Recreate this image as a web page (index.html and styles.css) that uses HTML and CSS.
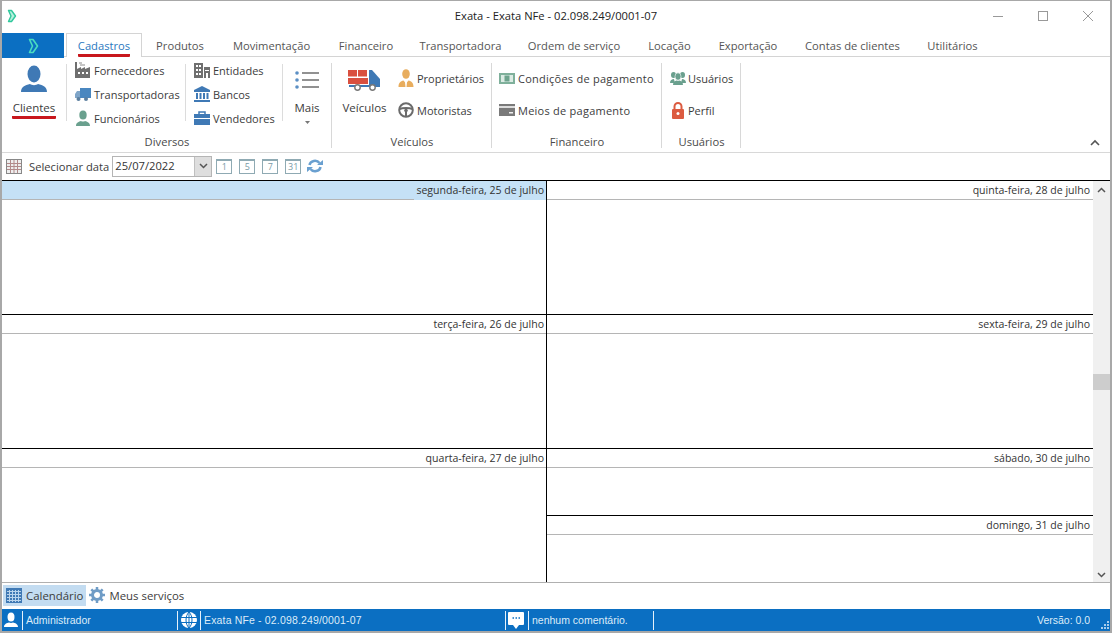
FILE: index.html
```html
<!DOCTYPE html>
<html lang="pt">
<head>
<meta charset="utf-8">
<title>Exata</title>
<link rel="stylesheet" href="styles.css">
</head>
<body>
<div class="window">
  <header class="titlebar">
    <svg class="app-icon" width="10" height="14" viewBox="0 0 10 14"><path d="M1.500 1.500H4.500L8.500 7L4.500 12.500H1.500L4 7Z" fill="#b6f0dc" stroke="#2fc79c" stroke-width="1.400" stroke-linejoin="round"/></svg>
    <div class="title">Exata - Exata NFe - 02.098.249/0001-07</div>
    <div class="winbtns">
      <svg width="12" height="12" viewBox="0 0 12 12"><path d="M1 6.500H11" stroke="#999"/></svg>
      <svg width="12" height="12" viewBox="0 0 12 12"><rect x="1.500" y="1.500" width="9" height="9" fill="none" stroke="#999"/></svg>
      <svg width="12" height="12" viewBox="0 0 12 12"><path d="M1 1L11 11M11 1L1 11" stroke="#999"/></svg>
    </div>
  </header>

  <nav class="tabs">
    <div class="filetab"><svg width="11" height="16" viewBox="0 0 11 16"><path d="M1.500 1.500H5L9.500 8L5 14.500H1.500L4.500 8Z" fill="#0b6fc2" stroke="#49dcc0" stroke-width="1.600" stroke-linejoin="round"/></svg></div>
    <div class="tab active"><span class="underlined">Cadastros</span></div>
    <div class="tab">Produtos</div>
    <div class="tab">Movimentação</div>
    <div class="tab">Financeiro</div>
    <div class="tab">Transportadora</div>
    <div class="tab">Ordem de serviço</div>
    <div class="tab">Locação</div>
    <div class="tab">Exportação</div>
    <div class="tab">Contas de clientes</div>
    <div class="tab">Utilitários</div>
  </nav>

  <section class="ribbon">
    <div class="group g-diversos">
      <div class="group-body">
        <div class="big clientes">
          <svg width="28" height="28" viewBox="0 0 28 28"><ellipse cx="14" cy="9" rx="6.500" ry="8.500" fill="#3f79b5"/><path d="M1 27c0-5 4-7 9-8 2 1.500 6 1.500 8 0 5 1 9 3 9 8z" fill="#3f79b5"/></svg>
          <span class="biglabel underlined2">Clientes</span>
        </div>
        <div class="sep"></div>
        <div class="col c1">
          <div class="item"><svg width="16" height="16" viewBox="0 0 16 16"><path d="M0 16V0h2v7l4-2v2l4-2v2l5-2v11z" fill="#6f6f6f"/><path d="M4 1h3M5 3h5" stroke="#8c8c8c"/><path d="M3 11h2M7 11h2M11 11h2" stroke="#fff" stroke-width="2"/></svg><span>Fornecedores</span></div>
          <div class="item"><svg width="16" height="16" viewBox="0 0 16 16"><rect x="5" y="2" width="11" height="10" fill="#4a87c0"/><path d="M0 12V8l2-3h3v7z" fill="#7fa5c8"/><circle cx="3.500" cy="13" r="2" fill="#5c7f9f"/><circle cx="11" cy="13" r="2" fill="#5c7f9f"/></svg><span>Transportadoras</span></div>
          <div class="item"><svg width="16" height="16" viewBox="0 0 16 16"><ellipse cx="8" cy="5" rx="3.700" ry="4.500" fill="#6aa08e"/><path d="M1 16c0-3.500 3-4.500 5-5 1 .8 3 .8 4 0 2 .5 5 1.500 5 5z" fill="#6aa08e"/></svg><span>Funcionários</span></div>
        </div>
        <div class="sep"></div>
        <div class="col c2">
          <div class="item"><svg width="16" height="16" viewBox="0 0 16 16"><path d="M0 1h9v15H0z" fill="#6f6f6f"/><path d="M10 5h6v11h-6z" fill="#6f6f6f"/><path d="M2 3h2v2H2zM5 3h2v2H5zM2 7h2v2H2zM5 7h2v2H5zM2 11h2v2H2zM5 11h2v2H5z" fill="#fff"/><path d="M11 8h4v1h-4zM12 11h2v5h-2z" fill="#fff"/></svg><span>Entidades</span></div>
          <div class="item"><svg width="16" height="16" viewBox="0 0 16 16"><path d="M8 0L0 4v2h16V4z" fill="#3f79b5"/><path d="M2 7h2v6H2zM5.500 7h2v6h-2zM9 7h2v6H9zM12.500 7h2v6h-2zM0 14h16v2H0z" fill="#3f79b5"/></svg><span>Bancos</span></div>
          <div class="item"><svg width="16" height="14" viewBox="0 0 16 14"><path d="M5 3V1h6v2" fill="none" stroke="#3f79b5" stroke-width="1.500"/><path d="M0 3h16v4H0zM0 8h16v6H0z" fill="#3f79b5"/></svg><span>Vendedores</span></div>
        </div>
        <div class="sep"></div>
        <div class="big mais">
          <svg width="24" height="18" viewBox="0 0 24 18"><g fill="#5b8fc4"><circle cx="2" cy="2" r="1.800"/><circle cx="2" cy="9" r="1.800"/><circle cx="2" cy="16" r="1.800"/></g><path d="M7 2H24M7 9H24M7 16H24" stroke="#6e6e6e" stroke-width="1.600"/></svg>
          <span class="biglabel">Mais</span>
          <svg class="caret" width="5" height="3" viewBox="0 0 5 3"><path d="M0 0H5L2.500 3z" fill="#777"/></svg>
        </div>
      </div>
      <div class="group-label">Diversos</div>
    </div>

    <div class="group g-veiculos">
      <div class="group-body">
        <div class="big veiculos">
          <svg width="33" height="21" viewBox="0 0 33 21"><path d="M0 0h9v6.500H0zM10 0h9v6.500h-9zM0 8h20v6H0z" fill="#d9503f"/><path d="M21 0h3l8 9v7H21z" fill="#3f79b5"/><path d="M1 15h31v2H1z" fill="#3f79b5"/><circle cx="9.500" cy="17.500" r="2.700" fill="#fff" stroke="#777" stroke-width="1.400"/><circle cx="24.500" cy="17.500" r="2.700" fill="#fff" stroke="#777" stroke-width="1.400"/></svg>
          <span class="biglabel">Veículos</span>
        </div>
        <div class="col c3">
          <div class="item"><svg width="15" height="18" viewBox="0 0 15 18"><ellipse cx="7.500" cy="5" rx="3.800" ry="4.800" fill="#e8ad5e"/><path d="M0 18c0-4 2-6 5-6.500l2.500 3 2.500-3c3 .5 5 2.500 5 6.500z" fill="#e8ad5e"/><path d="M6.500 13h2l-.5 5h-1z" fill="#fff"/></svg><span>Proprietários</span></div>
          <div class="item"><svg width="16" height="16" viewBox="0 0 16 16"><circle cx="8" cy="8" r="6.800" fill="none" stroke="#6b6b6b" stroke-width="2"/><path d="M1.500 7c3-1.500 10-1.500 13 0M8 9v6" stroke="#6b6b6b" stroke-width="2"/><circle cx="8" cy="8.500" r="1.800" fill="#6b6b6b"/></svg><span>Motoristas</span></div>
        </div>
      </div>
      <div class="group-label">Veículos</div>
    </div>

    <div class="group g-fin">
      <div class="group-body">
        <div class="col c4">
          <div class="item"><svg width="16" height="11" viewBox="0 0 16 11"><rect width="16" height="11" fill="#7fb09b"/><rect x="2" y="2" width="12" height="7" fill="#dcebe4"/><rect x="5.500" y="2.500" width="5" height="6" fill="#6ea38d"/></svg><span>Condições de pagamento</span></div>
          <div class="item"><svg width="16" height="12" viewBox="0 0 16 12"><rect width="16" height="12" fill="#7a7a7a"/><rect y="2" width="16" height="2" fill="#ddd"/><rect x="10" y="8" width="4" height="1.500" fill="#eee"/></svg><span>Meios de pagamento</span></div>
        </div>
      </div>
      <div class="group-label">Financeiro</div>
    </div>

    <div class="group g-usr">
      <div class="group-body">
        <div class="col c5">
          <div class="item"><svg width="16" height="14" viewBox="0 0 16 14"><g fill="#6aa08e"><ellipse cx="3.500" cy="4" rx="2.500" ry="3"/><ellipse cx="12.500" cy="4" rx="2.500" ry="3"/><path d="M0 12c0-3 2-4 4-4l1 4zM16 12c0-3-2-4-4-4l-1 4z"/><ellipse cx="8" cy="5.500" rx="3" ry="3.700" stroke="#fff" stroke-width=".6"/><path d="M3 14c0-3 2-4 3.500-4.500 1 .5 2 .5 3 0C11 10 13 11 13 14z"/></g></svg><span>Usuários</span></div>
          <div class="item"><svg width="14" height="17" viewBox="0 0 14 17"><path d="M3.500 7V4.500a3.500 3.500 0 0 1 7 0V7" fill="none" stroke="#dc5b40" stroke-width="2"/><rect x="1" y="7" width="12" height="10" rx="1" fill="#dc5b40"/><circle cx="7" cy="11.500" r="1.500" fill="#fff"/></svg><span>Perfil</span></div>
        </div>
      </div>
      <div class="group-label">Usuários</div>
    </div>

    <svg class="collapse" width="10" height="7" viewBox="0 0 10 7"><path d="M1 6L5 2L9 6" fill="none" stroke="#555" stroke-width="1.600"/></svg>
  </section>

  <section class="datebar">
    <svg width="16" height="15" viewBox="0 0 16 15"><rect x=".5" y=".5" width="15" height="14" fill="#eee" stroke="#888"/><path d="M1 4.500H15M1 7.500H15M1 10.500H15M4.500 1V14M8 1V14M11.500 1V14" stroke="#b28a8a"/></svg>
    <span class="datelabel">Selecionar data</span>
    <div class="datefield"><span class="dateval">25/07/2022</span><span class="datebtn"><svg width="9" height="6" viewBox="0 0 9 6"><path d="M1 1L4.500 4.500L8 1" fill="none" stroke="#555" stroke-width="1.500"/></svg></span></div>
    <div class="days">
      <span class="day">1</span><span class="day">5</span><span class="day">7</span><span class="day">31</span>
    </div>
    <svg class="refresh" width="16" height="14" viewBox="0 0 16 14"><path d="M2.500 6a5.500 5 0 0 1 10-2" fill="none" stroke="#6aa0d0" stroke-width="2.500"/><path d="M13.500 8a5.500 5 0 0 1-10 2" fill="none" stroke="#6aa0d0" stroke-width="2.500"/><path d="M10 6h6V1zM6 8H0v5z" fill="#6aa0d0"/></svg>
  </section>

  <main class="calendar">
    <div class="cal-col left">
      <div class="cell"><div class="cell-head selected"><span class="sel-label">segunda-feira, 25 de julho</span></div></div>
      <div class="cell"><div class="cell-head">terça-feira, 26 de julho</div></div>
      <div class="cell last"><div class="cell-head">quarta-feira, 27 de julho</div></div>
    </div>
    <div class="cal-col right">
      <div class="cell"><div class="cell-head">quinta-feira, 28 de julho</div></div>
      <div class="cell"><div class="cell-head">sexta-feira, 29 de julho</div></div>
      <div class="cell half"><div class="cell-head">sábado, 30 de julho</div></div>
      <div class="cell last"><div class="cell-head">domingo, 31 de julho</div></div>
    </div>
    <div class="scrollbar">
      <svg width="9" height="6" viewBox="0 0 9 6"><path d="M1 5L4.500 1.500L8 5" fill="none" stroke="#555" stroke-width="1.500"/></svg>
      <div class="track"><div class="thumb"></div></div>
      <svg width="9" height="6" viewBox="0 0 9 6"><path d="M1 1L4.500 4.500L8 1" fill="none" stroke="#555" stroke-width="1.500"/></svg>
    </div>
  </main>

  <section class="viewtabs">
    <div class="viewtab on"><svg width="16" height="15" viewBox="0 0 16 15"><rect width="16" height="15" fill="#3f79b5"/><path d="M1 3.500H15M1 6.500H15M1 9.500H15M1 12.500H15M3.500 2V14M6.500 2V14M9.500 2V14M12.500 2V14" stroke="#b9d4ec"/></svg><span>Calendário</span></div>
    <div class="viewtab"><svg width="16" height="16" viewBox="0 0 16 16"><circle cx="8" cy="8" r="4.500" fill="none" stroke="#6f9cc6" stroke-width="3"/><path d="M8 0v3M8 13v3M0 8h3M13 8h3M2.300 2.300l2.200 2.200M11.500 11.500l2.200 2.200M13.700 2.300l-2.200 2.200M4.500 11.500l-2.200 2.200" stroke="#6f9cc6" stroke-width="2.500"/></svg><span>Meus serviços</span></div>
  </section>

  <footer class="status">
    <svg class="st-user" width="14" height="16" viewBox="0 0 14 16"><ellipse cx="7" cy="5" rx="3.500" ry="4.500" fill="#fff"/><path d="M0 15c0-3 3-4 5-4.500 1 .6 3 .6 4 0 2 .5 5 1.500 5 4.500z" fill="#fff"/></svg>
    <span class="st-div"></span>
    <span class="st-text st-admin">Administrador</span>
    <span class="st-div"></span>
    <svg class="st-globe" width="18" height="18" viewBox="0 0 18 18"><circle cx="9" cy="9" r="8" fill="#fff"/><path d="M1 6.500H17M1 11.500H17M9 1V17M9 1C5 5 5 13 9 17M9 1C13 5 13 13 9 17" fill="none" stroke="#0b6fc2"/></svg>
    <span class="st-div"></span>
    <span class="st-text st-nfe">Exata NFe - 02.098.249/0001-07</span>
    <span class="st-div"></span>
    <svg class="st-chat" width="16" height="17" viewBox="0 0 16 17"><path d="M1 0h14a1 1 0 0 1 1 1v11a1 1 0 0 1-1 1h-4l-3 4-3-4H1a1 1 0 0 1-1-1V1a1 1 0 0 1 1-1z" fill="#fff"/><path d="M4.500 6h1.500M7.500 6h1.500M10.500 6h1.500" stroke="#0b6fc2" stroke-width="1.500"/></svg>
    <span class="st-div"></span>
    <span class="st-text st-com">nenhum comentário.</span>
    <span class="st-div"></span>
    <span class="st-text st-ver">Versão: 0.0</span>
    <svg class="grip" width="9" height="9" viewBox="0 0 9 9"><path d="M6 0h2v2H6zM3 3h2v2H3zM6 3h2v2H6zM0 6h2v2H0zM3 6h2v2H3zM6 6h2v2H6z" fill="#a9cdec"/></svg>
  </footer>
</div>
</body>
</html>
```
FILE: styles.css
```css
* { box-sizing: border-box; }
html, body { margin: 0; padding: 0; height: 100%; overflow: hidden; background: #fff; }
body { font-family: "Open Sans", "Noto Sans", sans-serif; font-size: 11px; color: #3c3c3c; }
svg { display: block; flex: none; }

.window {
  width: 1112px; height: 633px; display: flex; flex-direction: column;
  border: 1px solid #a8a8a8; border-width: 1px 2px 2px 2px;
  background: #fff; overflow: hidden;
}

.titlebar { height: 32px; flex: none; display: flex; align-items: center; position: relative; padding-left: 5px; }
.title { position: absolute; left: 0; right: 0; top: 7px; text-align: center; color: #222; font-size: 11.200px; }
.app-icon { margin-top: -3px; }
.winbtns { margin-left: auto; display: flex; gap: 33px; padding-right: 16px; margin-top: -3px; }

.tabs {
  height: 24px; flex: none; display: grid;
  grid-template-columns: 62px 78px 76px 107px 82px 107px 120px 71px 86px 123px 77px;
  justify-content: start; border-bottom: 1px solid #d4d4d4;
}
.filetab { background: #0b6fc2; display: flex; align-items: center; justify-content: center; margin-bottom: -1px; }
.tab { padding-top: 5px; color: #555; font-size: 11.200px; line-height: 16px; white-space: nowrap; text-align: center; }
.tab.active {
  margin-left: 2px; padding-top: 4px; color: #2a78c0; background: #fff;
  border: 1px solid #d4d4d4; border-bottom: none; height: 24px;
}
.underlined { display: inline-block; border-bottom: 3px solid #c8171d; border-radius: 1px; line-height: 15px; height: 19px; }

.ribbon { height: 96px; flex: none; display: flex; border-bottom: 1px solid #d8d8d8; position: relative; padding-top: 2px; }
.group {
  display: flex; flex-direction: column;
  background: linear-gradient(#d8d8d8, #d8d8d8) right 4px / 1px 85px no-repeat;
}
.group-body { height: 75px; flex: none; display: flex; }
.group-label { height: 16px; text-align: center; line-height: 16px; color: #4a4a4a; font-size: 11.200px; }
.g-diversos { width: 330px; }
.g-veiculos { width: 160px; }
.g-fin { width: 170px; }
.g-usr { width: 79px; }

.big { display: flex; flex-direction: column; align-items: center; }
.biglabel { color: #3c3c3c; line-height: 15px; font-size: 11.500px; }
.clientes { width: 64px; padding-top: 6px; }
.clientes .biglabel { margin-top: 7px; }
.underlined2 { border-bottom: 3px solid #c8171d; border-radius: 1px; padding: 0 1px 1px; }
.mais { width: 48px; padding-top: 12px; }
.mais .biglabel { margin-top: 11px; }
.caret { margin-top: 6px; }
.veiculos { width: 51px; padding-top: 11px; margin-left: 7px; }
.veiculos .biglabel { margin-top: 9px; }

.sep { width: 1px; background: #dcdcdc; margin: 5px 0 13px; flex: none; }
.col { display: flex; flex-direction: column; }
.item { display: flex; align-items: center; white-space: nowrap; color: #3c3c3c; gap: 3px; }
.c1 { padding-left: 8px; width: 118px; margin-top: -1px; }
.c1 .item, .c2 .item { height: 24px; }
.c2 { padding-left: 8px; width: 96px; margin-top: -1px; }
.c3 { padding: 3px 0 0 8px; }
.c3 .item, .c4 .item, .c5 .item { height: 32px; }
.c3 .item > svg { width: 16px; }
.c4 { padding: 3px 0 0 7px; }
.c4 span { letter-spacing: .25px; }
.c5 { padding: 3px 0 0 8px; }
.c5 .item { gap: 2px; }
.c5 .item > svg { width: 16px; }
.collapse { position: absolute; right: 10px; top: 82px; }

.datebar { height: 28px; flex: none; display: flex; align-items: center; padding: 0 0 1px 4px; border-bottom: 1px solid #000; font-size: 11.200px; }
.datelabel { margin-left: 7px; color: #3c3c3c; }
.datefield { margin-left: 3px; width: 100px; height: 21px; display: flex; border: 1px solid #b5b5b5; }
.dateval { flex: 1; padding-left: 2px; line-height: 18px; color: #333; }
.datebtn { width: 17px; background: #dedede; border-left: 1px solid #c0c0c0; display: flex; align-items: center; justify-content: center; }
.days { display: flex; gap: 7px; margin-left: 4px; }
.day { width: 16px; height: 15px; border: 1px solid #8faab3; border-top-width: 2px; font-size: 9px; line-height: 12px; text-align: center; color: #7a9aa6; }
.refresh { margin-left: 6px; }

.calendar { height: 402px; flex: none; display: flex; border-bottom: 1px solid #b0b0b0; }
.cal-col { display: flex; flex-direction: column; flex: none; }
.cal-col.left { width: 545px; border-right: 1px solid #000; }
.cal-col.right { width: 546px; }
.cell { height: 134px; border-bottom: 1px solid #000; flex: none; }
.cell.half { height: 67px; }
.cell.last { flex: 1; border-bottom: none; }
.cell-head { height: 19px; border-bottom: 1px solid #b5b5b5; text-align: right; padding-right: 3px; font-size: 10.550px; line-height: 18px; color: #333; }
.left .cell-head { padding-right: 2px; }
.cell-head.selected { background: #c5e1f6; padding-right: 0; border-bottom: none; position: relative; }
.sel-label { display: block; margin-left: 412px; padding-right: 2px; height: 19px; }
.cell-head.selected::after { content: ""; position: absolute; left: 0; width: 412px; bottom: 0; height: 1px; background: #b5b5b5; }
.scrollbar { width: 17px; flex: none; background: #f0f0f0; display: flex; flex-direction: column; align-items: center; padding: 6px 0 4px; }
.track { flex: 1; width: 100%; position: relative; }
.thumb { position: absolute; left: 0; right: 0; top: 181px; height: 16px; background: #cdcdcd; }

.viewtabs { height: 26px; flex: none; display: flex; align-items: center; padding: 0 0 2px 1px; font-size: 11.400px; }
.viewtab { display: flex; align-items: center; gap: 4px; height: 21px; padding: 0 3px; color: #3c3c3c; }
.viewtab.on { background: #c3dcf1; }

.status { height: 22px; flex: none; background: #0b6fc2; display: flex; align-items: center; color: #dcecf9; }
.st-text { color: #dcecf9; font-family: "Liberation Sans", Arial, sans-serif; font-size: 10.500px; white-space: nowrap; padding-left: 3px; }
.st-div { width: 1px; height: 19px; background: #e6f1fa; flex: none; }
.st-user { margin: 0 4px 0 2px; }
.st-admin { width: 154px; }
.st-globe { margin: 0 2px; }
.st-nfe { width: 304px; letter-spacing: .16px; }
.st-chat { margin: 0 4px 0 2px; }
.st-com { width: 124px; }
.st-ver { margin-left: auto; padding-left: 0; width: 53px; overflow: hidden; }
.grip { margin: 11px 0 0 11px; }
```
